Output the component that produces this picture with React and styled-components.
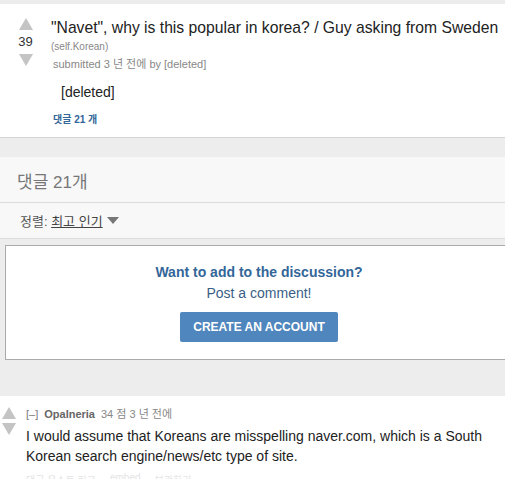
import React from 'react';
import styled, { createGlobalStyle } from 'styled-components';

const GlobalStyle = createGlobalStyle`
  html, body {
    margin: 0;
    padding: 0;
    background: #ededed;
    font-family: Arial, "Liberation Sans", "Noto Sans CJK KR", sans-serif;
  }
`;

const Arrow = ({ down, size = 14 }) => (
  <svg width={size} height={size - 2} viewBox="0 0 14 12">
    {down ? (
      <polygon points="0,0 14,0 7,12" fill="#c4c4c4" />
    ) : (
      <polygon points="7,0 14,12 0,12" fill="#c4c4c4" />
    )}
  </svg>
);

const App = () => {
  return (
    <Page>
      <GlobalStyle />
      <TopStrip />
      <PostCard>
        <Votes>
          <Arrow />
          <Score>39</Score>
          <Arrow down />
        </Votes>
        <PostBody>
          <Title>"Navet", why is this popular in korea? / Guy asking from Sweden</Title>
          <Domain>(self.Korean)</Domain>
          <Tagline>submitted 3 년 전에 by [deleted]</Tagline>
          <SelfText>[deleted]</SelfText>
          <CommentLink>댓글 21 개</CommentLink>
        </PostBody>
      </PostCard>

      <Spacer $h={19} />

      <CommentsHeader>댓글 21개</CommentsHeader>
      <SortBar>
        정렬: <SortLink>최고 인기</SortLink>
        <Caret viewBox="0 0 12 7" width="12" height="7">
          <polygon points="0,0 12,0 6,7" fill="#777" />
        </Caret>
      </SortBar>

      <Spacer $h={6} />

      <SignupBox>
        <Question>Want to add to the discussion?</Question>
        <Prompt>Post a comment!</Prompt>
        <AccountButton>CREATE AN ACCOUNT</AccountButton>
      </SignupBox>

      <Spacer $h={36} />

      <Comment>
        <CommentVotes>
          <Arrow />
          <Arrow down />
        </CommentVotes>
        <CommentBody>
          <CommentMeta>
            <Toggle>[–]</Toggle>
            <Author>Opalneria</Author>
            <span>34 점 3 년 전에</span>
          </CommentMeta>
          <CommentText>
            I would assume that Koreans are misspelling naver.com, which is a South
            Korean search engine/news/etc type of site.
          </CommentText>
          <CommentActions>
            <span>댓글 유스트 링크</span>
            <span>embed</span>
            <span>보관하기</span>
          </CommentActions>
        </CommentBody>
      </Comment>
    </Page>
  );
};

const Page = styled.div`
  width: 505px;
  height: 479px;
  overflow: hidden;
  background: #ededed;
`;

const TopStrip = styled.div`
  height: 4px;
  background: #ececec;
`;

const Spacer = styled.div`
  height: ${(p) => p.$h}px;
`;

const PostCard = styled.div`
  display: flex;
  height: 134px;
  box-sizing: border-box;
  background: #fff;
  border-bottom: 1px solid #d6d6d6;
  padding: 14px 0 0 18px;
`;

const Votes = styled.div`
  display: flex;
  flex-direction: column;
  align-items: center;
  width: 15px;
  gap: 4px;
`;

const Score = styled.div`
  font-size: 13px;
  color: #333;
  line-height: 16px;
`;

const PostBody = styled.div`
  margin-left: 18px;
  display: flex;
  flex-direction: column;
  align-items: flex-start;
`;

const Title = styled.div`
  font-size: 15.7px;
  color: #222;
  line-height: 20px;
  white-space: nowrap;
`;

const Domain = styled.div`
  font-size: 10px;
  color: #888;
  margin-top: 2px;
  line-height: 13px;
`;

const Tagline = styled.div`
  font-size: 11px;
  color: #888;
  margin: 4px 0 0 2px;
  line-height: 14px;
`;

const SelfText = styled.div`
  font-size: 14px;
  color: #222;
  margin: 12px 0 0 10px;
  line-height: 18px;
`;

const CommentLink = styled.div`
  font-size: 10px;
  font-weight: bold;
  color: #336699;
  margin: 12px 0 0 2px;
  line-height: 14px;
`;

const CommentsHeader = styled.div`
  height: 46px;
  box-sizing: border-box;
  background: #f8f8f8;
  border-bottom: 1px solid #dcdcdc;
  padding: 11px 0 0 17px;
  font-size: 17px;
  color: #777;
`;

const SortBar = styled.div`
  display: flex;
  align-items: center;
  height: 36px;
  box-sizing: border-box;
  background: #f8f8f8;
  border-bottom: 1px solid #dcdcdc;
  padding: 0 0 0 20px;
  font-size: 13px;
  color: #555;
  white-space: pre;
`;

const SortLink = styled.span`
  color: #444;
  text-decoration: underline;
`;

const Caret = styled.svg`
  margin-left: 4px;
`;

const SignupBox = styled.div`
  margin-left: 5px;
  width: 508px;
  height: 115px;
  box-sizing: border-box;
  background: #fff;
  border: 1px solid #aaa;
  display: flex;
  flex-direction: column;
  align-items: center;
  padding-top: 17px;
`;

const Question = styled.div`
  font-size: 14px;
  font-weight: bold;
  color: #336699;
  line-height: 18px;
`;

const Prompt = styled.div`
  font-size: 14px;
  color: #3a5f86;
  line-height: 18px;
  margin-top: 3px;
`;

const AccountButton = styled.button`
  margin-top: 10px;
  width: 158px;
  height: 30px;
  border: none;
  border-radius: 2px;
  background: #4f86bd;
  color: #fff;
  font-family: inherit;
  font-size: 12px;
  font-weight: bold;
  cursor: pointer;
`;

const Comment = styled.div`
  display: flex;
  background: #fff;
  height: 200px;
  padding: 11px 0 0 2px;
`;

const CommentVotes = styled.div`
  display: flex;
  flex-direction: column;
  gap: 4px;
  width: 14px;
`;

const CommentBody = styled.div`
  margin-left: 10px;
  display: flex;
  flex-direction: column;
`;

const CommentMeta = styled.div`
  display: flex;
  gap: 6px;
  font-size: 11px;
  color: #888;
  line-height: 14px;
`;

const Toggle = styled.span`
  color: #777;
`;

const Author = styled.span`
  color: #666;
  font-weight: bold;
`;

const CommentText = styled.div`
  font-size: 14px;
  color: #222;
  line-height: 20px;
  margin-top: 5px;
  width: 470px;
`;

const CommentActions = styled.div`
  display: flex;
  gap: 14px;
  font-size: 10px;
  color: #e4e4e4;
  margin-top: 6px;
`;

export default App;
